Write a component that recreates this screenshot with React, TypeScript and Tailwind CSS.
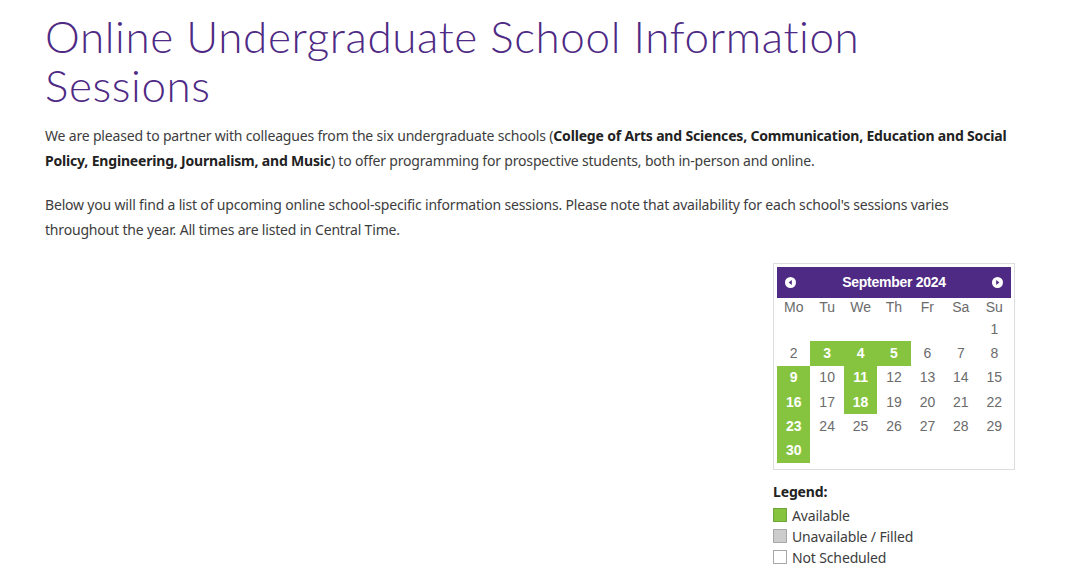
import React from "react";

const body = "font-['Noto_Sans','Open_Sans',sans-serif]";

function Arrow({ dir }: { dir: "left" | "right" }) {
  return (
    <svg width="11" height="11" viewBox="0 0 11 11" className="block">
      <circle cx="5.5" cy="5.5" r="5.5" fill="#ffffff" />
      {dir === "left" ? (
        <path d="M6.8 3 L3.6 5.5 L6.8 8 Z" fill="#4e2a84" />
      ) : (
        <path d="M4.2 3 L7.4 5.5 L4.2 8 Z" fill="#4e2a84" />
      )}
    </svg>
  );
}

const available = new Set([3, 4, 5, 9, 11, 16, 18, 23, 30]);

export default function App() {
  const cells: (number | null)[] = [null, null, null, null, null, null];
  for (let d = 1; d <= 30; d++) cells.push(d);
  while (cells.length < 42) cells.push(null);
  const days = ["Mo", "Tu", "We", "Th", "Fr", "Sa", "Su"];

  return (
    <div className="min-h-[586px] w-full bg-white pl-[45px] pr-[45px] pt-[12px]">
      <h1 className="font-['Lato',sans-serif] font-light text-[44px] leading-[49px] tracking-[0.0135em] text-[#4e2a84]">
        Online Undergraduate School Information
        <br />
        Sessions
      </h1>

      <div className={`${body} mt-[13px] text-[14px] leading-[25px] tracking-[-0.013em] text-[#3d3d3d]`}>
        <p className="whitespace-nowrap">
          We are pleased to partner with colleagues from the six undergraduate schools (
          <b className="font-bold text-[#222]">College of Arts and Sciences, Communication, Education and Social</b>
        </p>
        <p className="whitespace-nowrap">
          <b className="font-bold text-[#222]">Policy, Engineering, Journalism, and Music</b>) to offer programming for prospective
          students, both in-person and online.
        </p>
        <p className="mt-[19px] whitespace-nowrap">
          Below you will find a list of upcoming online school-specific information sessions. Please note that
          availability for each school's sessions varies
        </p>
        <p className="whitespace-nowrap">throughout the year. All times are listed in Central Time.</p>
      </div>

      <div className="mt-[21px] flex justify-end pr-[20px]">
        <div className="w-[242px]">
          <div className="border border-[#dddddd] px-[3px] pt-[3px] pb-[6px]">
            <div className="flex h-[31px] items-center justify-between bg-[#4e2a84] px-[8px]">
              <Arrow dir="left" />
              <span className="font-['Liberation_Sans',Arial,sans-serif] text-[14px] font-bold tracking-[-0.02em] text-white">
                September 2024
              </span>
              <Arrow dir="right" />
            </div>
            <div className="grid grid-cols-7 font-['Liberation_Sans',Arial,sans-serif]">
              {days.map((d) => (
                <div key={d} className="flex h-[19px] items-center justify-center text-[14px] text-[#6b6b6b]">
                  {d}
                </div>
              ))}
              {cells.map((c, i) => (
                <div
                  key={i}
                  className={
                    c && available.has(c)
                      ? "flex h-[24.3px] items-center justify-center bg-[#86c440] text-[14px] font-bold text-white"
                      : "flex h-[24.3px] items-center justify-center text-[14px] text-[#6b6b6b]"
                  }
                >
                  {c ?? ""}
                </div>
              ))}
            </div>
          </div>

          <div className={`${body} mt-[11px] text-[14px] leading-[21px] tracking-[-0.01em] text-[#3d3d3d]`}>
            <div className="font-bold text-[#222]">Legend:</div>
            <div className="mt-[3px] flex items-center gap-[5px]">
              <span className="block h-[14px] w-[14px] border border-[#6fa63a] bg-[#86c440]" />
              <span>Available</span>
            </div>
            <div className="flex items-center gap-[5px]">
              <span className="block h-[14px] w-[14px] border border-[#a8a8a8] bg-[#cccccc]" />
              <span>Unavailable / Filled</span>
            </div>
            <div className="flex items-center gap-[5px]">
              <span className="block h-[14px] w-[14px] border border-[#a8a8a8] bg-white" />
              <span>Not Scheduled</span>
            </div>
          </div>
        </div>
      </div>
    </div>
  );
}
